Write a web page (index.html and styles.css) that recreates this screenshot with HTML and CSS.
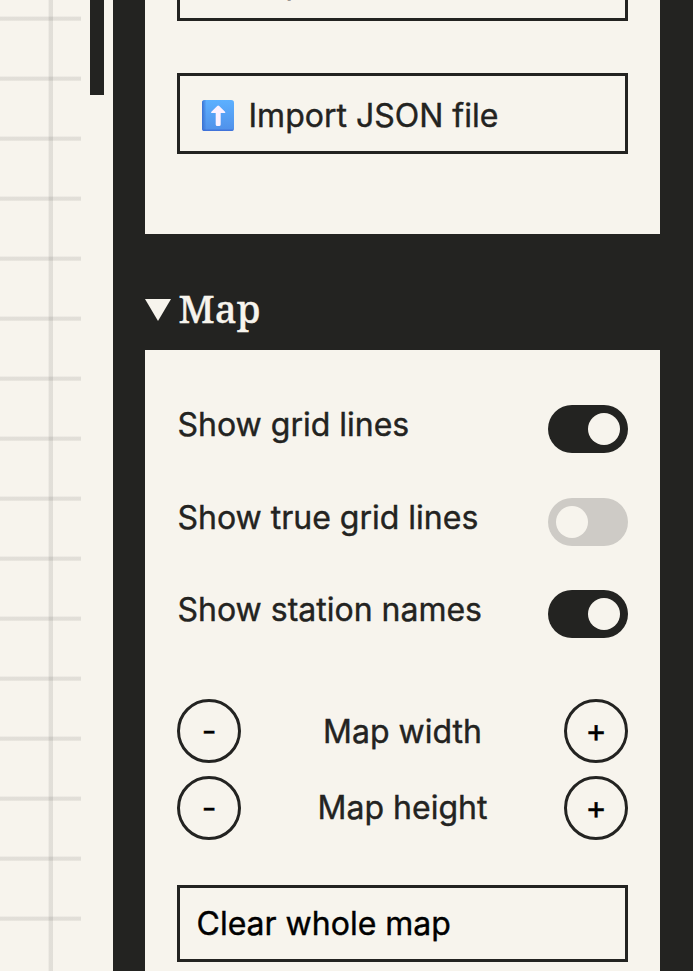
FILE: index.html
```html
<!DOCTYPE html>
<html lang="en">
<head>
<meta charset="utf-8">
<title>Map editor</title>
<link rel="stylesheet" href="styles.css">
</head>
<body>
<div class="app">
  <main class="canvas">
    <div class="grid"></div>
    <div class="scrollbar"><div class="thumb"></div></div>
  </main>
  <aside class="sidebar">
    <section class="panel panel-file">
      <button class="box file-button export"><span class="label">Export JSON file</span></button>
      <button class="box file-button">
        <svg class="icon" viewBox="0 0 32 31" aria-hidden="true">
          <defs>
            <linearGradient id="face" x1="0" y1="0" x2="0" y2="1">
              <stop offset="0" stop-color="#5cb0ff"/>
              <stop offset="1" stop-color="#5090e9"/>
            </linearGradient>
            <linearGradient id="edge" x1="0" y1="0" x2="1" y2="0">
              <stop offset="0" stop-color="#3971d2"/>
              <stop offset="1" stop-color="#3971d2" stop-opacity="0"/>
            </linearGradient>
            <linearGradient id="base" x1="0" y1="1" x2="0" y2="0">
              <stop offset="0" stop-color="#3c6bd6"/>
              <stop offset="1" stop-color="#3c6bd6" stop-opacity="0"/>
            </linearGradient>
          </defs>
          <rect width="32" height="31" rx="2.8" fill="url(#face)"/>
          <path d="M2.8 0H4.5V31H2.8Q0 31 0 28.2V2.8Q0 0 2.8 0Z" fill="url(#edge)"/>
          <path d="M0 28.5H32Q32 31 29.2 31H2.8Q0 31 0 28.5Z" fill="url(#base)"/>
          <path d="M15.2 6Q16.2 5 17.2 6L23 11.8Q24.1 13.1 22.5 13.1H18.7V24.4Q18.7 26 17.1 26H15.3Q13.7 26 13.7 24.4V13.1H9.9Q8.3 13.1 9.4 11.8Z" fill="#fcf1ff"/>
        </svg>
        <span class="label">Import JSON file</span>
      </button>
    </section>
    <h2 class="heading">
      <svg class="marker" viewBox="0 0 26 22" aria-hidden="true"><path d="M0 0H26L13 22Z" fill="#f7f4ed"/></svg>
      <span class="title">Map</span>
    </h2>
    <section class="panel panel-map">
      <div class="setting"><span class="name">Show grid lines</span><span class="switch on"></span></div>
      <div class="setting"><span class="name">Show true grid lines</span><span class="switch"></span></div>
      <div class="setting"><span class="name">Show station names</span><span class="switch on"></span></div>
      <div class="stepper first"><button class="round">-</button><span>Map width</span><button class="round">+</button></div>
      <div class="stepper"><button class="round">-</button><span>Map height</span><button class="round">+</button></div>
      <button class="box clear">Clear whole map</button>
    </section>
  </aside>
</div>
</body>
</html>
```

FILE: styles.css
```css
* { box-sizing: border-box; }
body {
  margin: 0;
  overflow: hidden;
  background: #f7f4ed;
  color: #232321;
  font: 400 32px/40px Inter, sans-serif;
  -webkit-text-stroke: 0.4px;
}
button { font: inherit; color: inherit; background: none; margin: 0; }
.app { display: flex; height: 971px; overflow: hidden; }
.canvas { display: flex; width: 113px; flex: none; }
.grid {
  width: 81px;
  background:
    linear-gradient(90deg, transparent 48px, #2323210a 48px, #2323210a 49px, #2323211a 49px, #2323211a 53px, transparent 53px),
    linear-gradient(transparent 16px, #2323210a 16px, #2323210a 17px, #2323211a 17px, #2323211a 20px, #23232112 20px, #23232112 21px, transparent 21px) 0 0 / 100% 60px;
}
.scrollbar { padding-left: 9px; }
.thumb { width: 14px; height: 95px; background: #232321; }
.sidebar {
  flex: 1;
  display: flex;
  flex-direction: column;
  padding: 0 33px 0 32px;
  background: #232321;
}
.panel { flex: none; padding: 0 32px; background: #f7f4ed; }
.panel-file { height: 234px; overflow: hidden; }
.box {
  display: flex;
  align-items: center;
  width: 100%;
  border: 3px solid #232321;
  text-align: left;
}
.file-button { height: 81px; padding: 4px 22px 0; gap: 14.5px; }
.icon { width: 32px; height: 31px; flex: none; }
.file-button .label { padding-top: 1px; }
.export { margin: -60px 0 52px; padding: 3px 22px 0 68.5px; }
.heading {
  display: flex;
  align-items: center;
  flex: none;
  height: 116px;
  margin: 0;
  padding-top: 36px;
  gap: 7.5px;
  color: #f7f4ed;
  font: 500 38.4px/54px "Noto Serif", "Liberation Serif", serif;
}
.title { margin-top: -4px; }
.marker { width: 26px; height: 22px; }
.panel-map { height: 700px; padding-top: 55px; }
.setting { display: flex; justify-content: space-between; height: 48px; margin-bottom: 44.5px; }
.name { padding-left: 0.5px; }
.switch { display: flex; width: 80px; height: 48px; padding: 8px; border-radius: 24px; background: #cecbc6; }
.switch::before { content: ""; width: 32px; height: 32px; border-radius: 50%; background: #f7f4ed; }
.switch.on { justify-content: flex-end; background: #232321; }
.stepper { display: flex; justify-content: space-between; align-items: center; height: 64px; margin-top: 13px; }
.stepper.first { margin-top: 60.5px; }
.first span { padding-top: 2px; }
.round {
  width: 64px;
  height: 64px;
  padding: 0;
  border: 3px solid #232321;
  border-radius: 50%;
  color: #000;
}
.clear { height: 77px; margin-top: 45px; padding: 2px 16.5px 0; color: #000; }
```
